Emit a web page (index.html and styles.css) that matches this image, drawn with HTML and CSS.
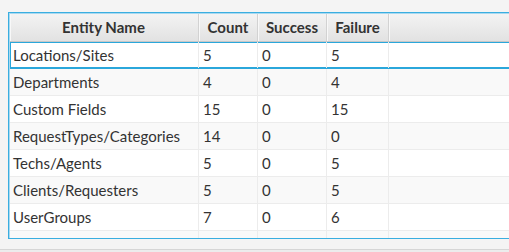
FILE: index.html
```html
<!DOCTYPE html>
<html>
<head>
<meta charset="utf-8">
<link rel="stylesheet" href="styles.css">
</head>
<body>
<div class="page">
  <div class="table">
    <div class="row header">
      <div class="cell c1">Entity Name</div>
      <div class="cell c2">Count</div>
      <div class="cell c3">Success</div>
      <div class="cell c4">Failure</div>
      <div class="cell filler"></div>
    </div>
    <div class="row odd focused">
      <div class="cell c1">Locations/Sites</div>
      <div class="cell c2">5</div>
      <div class="cell c3">0</div>
      <div class="cell c4">5</div>
      <div class="cell filler"></div>
    </div>
    <div class="row even">
      <div class="cell c1">Departments</div>
      <div class="cell c2">4</div>
      <div class="cell c3">0</div>
      <div class="cell c4">4</div>
      <div class="cell filler"></div>
    </div>
    <div class="row odd">
      <div class="cell c1">Custom Fields</div>
      <div class="cell c2">15</div>
      <div class="cell c3">0</div>
      <div class="cell c4">15</div>
      <div class="cell filler"></div>
    </div>
    <div class="row even">
      <div class="cell c1">RequestTypes/Categories</div>
      <div class="cell c2">14</div>
      <div class="cell c3">0</div>
      <div class="cell c4">0</div>
      <div class="cell filler"></div>
    </div>
    <div class="row odd">
      <div class="cell c1">Techs/Agents</div>
      <div class="cell c2">5</div>
      <div class="cell c3">0</div>
      <div class="cell c4">5</div>
      <div class="cell filler"></div>
    </div>
    <div class="row even">
      <div class="cell c1">Clients/Requesters</div>
      <div class="cell c2">5</div>
      <div class="cell c3">0</div>
      <div class="cell c4">5</div>
      <div class="cell filler"></div>
    </div>
    <div class="row odd">
      <div class="cell c1">UserGroups</div>
      <div class="cell c2">7</div>
      <div class="cell c3">0</div>
      <div class="cell c4">6</div>
      <div class="cell filler"></div>
    </div>
    <div class="row even partial">
      <div class="cell c1"></div>
      <div class="cell c2"></div>
      <div class="cell c3"></div>
      <div class="cell c4"></div>
      <div class="cell filler"></div>
    </div>
  </div>
  <div class="below"></div>
</div>
</body>
</html>
```
FILE: styles.css
```css
html, body {
  margin: 0;
  padding: 0;
  background: #f4f4f4;
  overflow: hidden;
}
.page {
  width: 509px;
  height: 252px;
  padding: 12px 0 0 8px;
  box-sizing: border-box;
  overflow: hidden;
  font-family: "Lato", "Open Sans", sans-serif;
  font-size: 15px;
  color: #333333;
}
.table {
  width: 540px;
  height: 227px;
  border: 1px solid #3aaee0;
  box-shadow: inset 0 0 0 1px #a9d9f0;
  padding: 1px;
  box-sizing: border-box;
  background: #ffffff;
  overflow: hidden;
  display: flex;
  flex-direction: column;
}
.row {
  display: flex;
  flex: none;
  height: 27px;
  box-sizing: border-box;
  border-bottom: 1px solid #ececec;
}
.row.odd { background: #ffffff; }
.row.even { background: #f9f9f9; }
.row.focused {
  box-shadow: inset 0 0 0 1px #2aa7db;
  border-bottom-color: #2aa7db;
}
.row.partial { height: 8px; border-bottom: none; }
.header {
  height: 28px;
  background: linear-gradient(#f3f3f3, #e2e2e2);
  border-bottom: 1px solid #c8c8c8;
  font-weight: bold;
}
.cell {
  flex: none;
  box-sizing: border-box;
  border-right: 1px solid #ececec;
  padding: 0 4px;
  display: flex;
  align-items: center;
  white-space: nowrap;
}
.header .cell {
  justify-content: center;
  border-right: 1px solid #d2d2d2;
  box-shadow: inset 1px 0 0 #f8f8f8;
  padding-bottom: 1px;
}
.c1 { width: 189px; padding-left: 3px; }
.c2 { width: 59px; }
.c3 { width: 69px; }
.c4 { width: 62px; }
.filler { flex: 1; border-right: none; }
.header .filler { border-right: none; }
.below {
  margin-top: 10px;
  margin-left: -8px;
  height: 4px;
  border-top: 1px solid #d6d6d6;
  background: #ececec;
}
```
